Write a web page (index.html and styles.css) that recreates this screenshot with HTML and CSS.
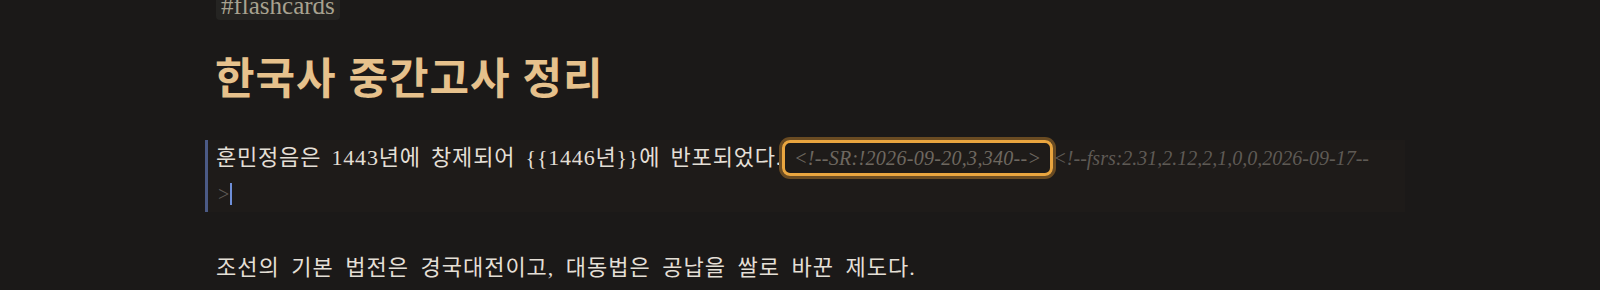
FILE: index.html
```html
<!DOCTYPE html>
<html lang="ko">
<head>
  <meta charset="UTF-8">
  <title>한국사 중간고사 정리</title>
  <link rel="stylesheet" href="styles.css">
</head>
<body>
  <div class="editor">
    <div class="note">
      <div class="tags">
        <span class="tag">#flashcards</span>
      </div>

      <h1 class="note-title">한국사 중간고사 정리</h1>

      <div class="line active">
        <span class="text">훈민정음은 1443년에 창제되어 {{1446년}}에 반포되었다.</span><span class="comment match">&lt;!--SR:!2026-09-20,3,340--&gt;</span><span class="comment">&lt;!--fsrs:2.31,2.12,2,1,0,0,2026-09-17--</span><br><span class="comment plain">&gt;</span><span class="cursor"></span>
      </div>

      <div class="line empty"></div>

      <div class="line">
        <span class="text">조선의 기본 법전은 경국대전이고, 대동법은 공납을 쌀로 바꾼 제도다.</span>
      </div>
    </div>
  </div>
</body>
</html>
```

FILE: styles.css
```css
/* General Styles */
body {
  margin: 0;
  background-color: #1b1918;
  font-family: 'Liberation Serif', 'Noto Sans CJK KR', serif;
  color: #dcd6cc;
  height: 290px;
  overflow: hidden;
}

.editor {
  padding-left: 205px;
}

.note {
  display: flow-root;
  width: 1200px;
}

.tags {
  display: flex;
  margin-top: -10px;
  padding-left: 11px;
}

.tag {
  padding: 2px 5px 0;
  background-color: #252422;
  border-radius: 4px;
  color: #a8a290;
  font-size: 25px;
  line-height: 28px;
}

.note-title {
  margin: 35px 0 35px 10px;
  font-size: 43px;
  line-height: 50px;
  font-weight: 600;
  letter-spacing: 1px;
  color: #e6c18c;
}

.line {
  padding-left: 8px;
  font-size: 22px;
  line-height: 35px;
  min-height: 35px;
  border-left: 3px solid transparent;
}

.line.active {
  background-color: #1e1b19;
  border-left-color: #4b5a85;
}

.text {
  color: #e4dfd6;
  letter-spacing: 1px;
  word-spacing: 5px;
}

.active .text {
  letter-spacing: 0.8px;
  word-spacing: 4px;
}

.comment {
  font-style: italic;
  color: #5e5a55;
  font-size: 20px;
  white-space: nowrap;
}

.comment.match {
  display: inline-block;
  padding: 0 9px;
  line-height: 30px;
  letter-spacing: 0.3px;
  border: 3px solid #e9a53f;
  border-radius: 8px;
  box-shadow: 0 0 0 3px #6a4b22;
  color: #6e6860;
}

.comment.plain {
  font-style: normal;
  margin-left: 2px;
}

.cursor {
  display: inline-block;
  width: 2px;
  height: 22px;
  margin-left: 1px;
  vertical-align: -4px;
  background-color: #6f8fd8;
}

.empty + .line {
  padding-top: 3px;
}
```
